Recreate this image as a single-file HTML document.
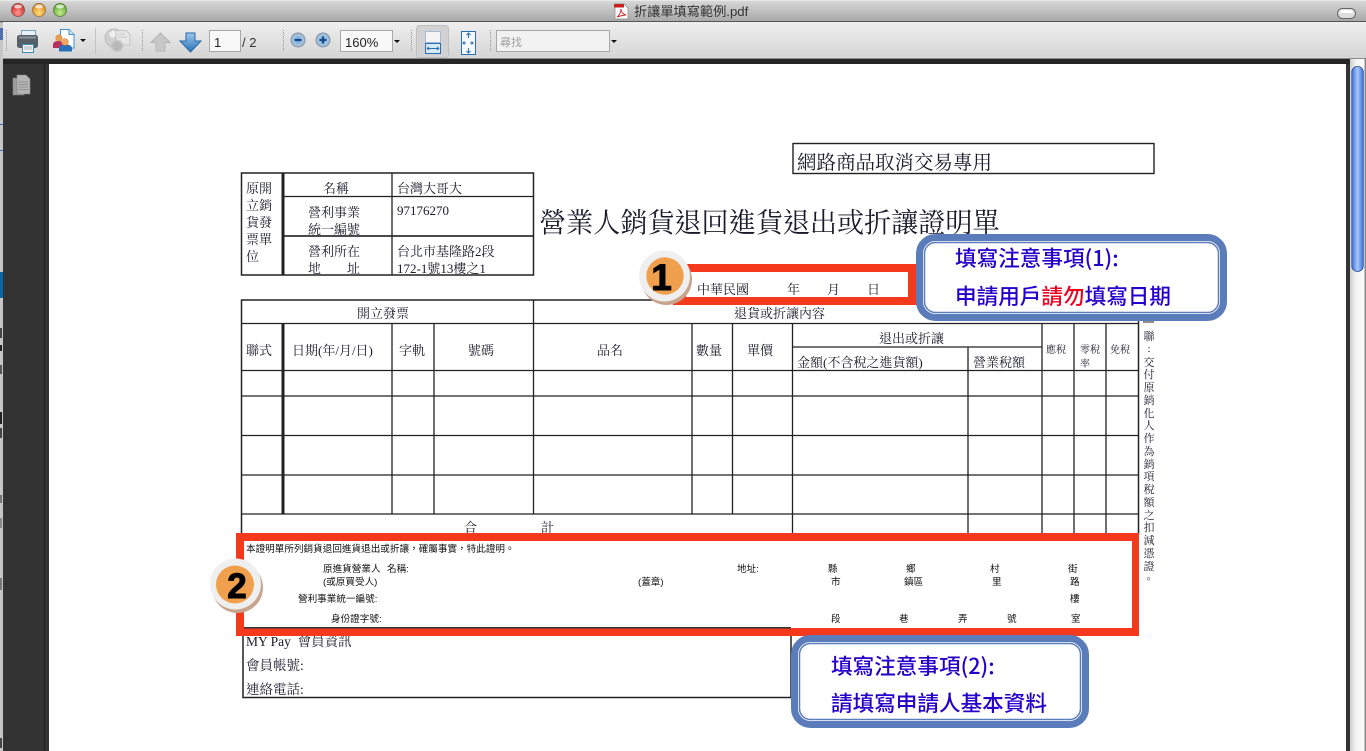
<!DOCTYPE html>
<html lang="zh-TW"><head><meta charset="utf-8"><title>折讓單填寫範例.pdf</title>
<style>
html,body{margin:0;padding:0;background:#fff;width:1366px;height:751px;overflow:hidden}
svg{display:block;position:absolute;left:0;top:0}
.s{font-family:"Liberation Serif","Noto Serif CJK SC",serif;fill:#1a1a2a}
.u{font-family:"Liberation Sans","Noto Sans CJK TC",sans-serif}
.c{font-family:"Noto Sans CJK TC","Liberation Sans",sans-serif;font-size:21.6px;fill:#2400cc;font-weight:500}
.t13{font-size:13px}.t10{font-size:10px}.t9{font-size:9.6px;font-family:"Liberation Sans","Noto Sans CJK TC",sans-serif;fill:#111}
</style></head><body>
<svg width="1366" height="751" viewBox="0 0 1366 751" xmlns="http://www.w3.org/2000/svg">
<defs>
<linearGradient id="tb" x1="0" y1="0" x2="0" y2="1"><stop offset="0" stop-color="#d9d9d9"/><stop offset="1" stop-color="#a6a6a6"/></linearGradient>
<linearGradient id="tl" x1="0" y1="0" x2="0" y2="1"><stop offset="0" stop-color="#efefef"/><stop offset="1" stop-color="#d4d4d4"/></linearGradient>
<radialGradient id="r" cx=".5" cy=".7" r=".7"><stop offset="0" stop-color="#ff9a90"/><stop offset="1" stop-color="#c41a1a"/></radialGradient>
<radialGradient id="y" cx=".5" cy=".7" r=".7"><stop offset="0" stop-color="#ffe080"/><stop offset="1" stop-color="#d97a10"/></radialGradient>
<radialGradient id="g" cx=".5" cy=".7" r=".7"><stop offset="0" stop-color="#c4ee90"/><stop offset="1" stop-color="#4f9a20"/></radialGradient>
<linearGradient id="sc" x1="0" y1="0" x2="1" y2="0"><stop offset="0" stop-color="#3f6fd8"/><stop offset=".5" stop-color="#a8c8fa"/><stop offset="1" stop-color="#3f6fd8"/></linearGradient>
<linearGradient id="bl" x1="0" y1="0" x2="0" y2="1"><stop offset="0" stop-color="#9cc8ec"/><stop offset="1" stop-color="#2a72b8"/></linearGradient>
<radialGradient id="zb" cx=".5" cy=".5" r=".5"><stop offset="0" stop-color="#5c94cc"/><stop offset=".7" stop-color="#a8c8e4"/><stop offset="1" stop-color="#7c8c9c"/></radialGradient>
<linearGradient id="sb" x1="0" y1="0" x2="1" y2="0"><stop offset="0" stop-color="#d0d0d0"/><stop offset=".4" stop-color="#f4f4f4"/><stop offset="1" stop-color="#fdfdfd"/></linearGradient>
</defs>

<!-- left strip -->
<rect x="0" y="22" width="4" height="729" fill="#c6c6c6"/>
<rect x="0" y="28" width="3" height="12" fill="#5070b0"/>
<rect x="0" y="124" width="3" height="1" fill="#3a6fc0"/><rect x="0" y="150" width="3" height="1" fill="#3a6fc0"/>
<rect x="0" y="272" width="3" height="26" fill="#0a64a8"/>
<rect x="0" y="328" width="2" height="10" fill="#444"/><rect x="0" y="345" width="2" height="6" fill="#222"/><rect x="0" y="365" width="2" height="9" fill="#555"/>
<rect x="0" y="412" width="2" height="12" fill="#222"/><rect x="0" y="428" width="2" height="10" fill="#444"/><rect x="0" y="495" width="2" height="8" fill="#777"/><rect x="0" y="518" width="2" height="10" fill="#888"/><rect x="0" y="578" width="2" height="12" fill="#777"/><rect x="0" y="738" width="2" height="10" fill="#444"/>

<!-- title bar -->
<rect x="0" y="0" width="1366" height="22" fill="url(#tb)"/>
<rect x="0" y="0" width="1366" height="1" fill="#e8e8e8"/>
<rect x="0" y="21" width="1366" height="1.4" fill="#555"/>
<circle cx="18" cy="10" r="6.600" fill="url(#r)" stroke="#8a5050" stroke-width=".7"/>
<circle cx="39" cy="10" r="6.600" fill="url(#y)" stroke="#8a7040" stroke-width=".7"/>
<circle cx="60" cy="10" r="6.600" fill="url(#g)" stroke="#5a7a40" stroke-width=".7"/>
<ellipse cx="18" cy="6.500" rx="4" ry="2" fill="#fff" opacity=".7"/><ellipse cx="39" cy="6.500" rx="4" ry="2" fill="#fff" opacity=".7"/><ellipse cx="60" cy="6.500" rx="4" ry="2" fill="#fff" opacity=".7"/>
<path d="M615 4h9l4 4v11h-13z" fill="#fff" stroke="#888" stroke-width=".7"/><rect x="614" y="4" width="10" height="3.500" fill="#c8201c"/><path d="M617 17c3-2 4-6 4-8 0 3 2 5 5 6-3 0-6 1-9 2z" fill="none" stroke="#d02020" stroke-width=".9"/>
<text x="634" y="16" class="u" font-size="13.200" fill="#333">折讓單填寫範例.pdf</text>
<rect x="1337.500" y="8.500" width="18" height="10" rx="5" fill="#ddd" stroke="#666"/>
<rect x="1340" y="10" width="13" height="3" rx="1.500" fill="#fff"/>

<!-- toolbar -->
<rect x="3" y="22" width="1363" height="37" fill="url(#tl)"/>
<rect x="3" y="58" width="1363" height="1.200" fill="#8c8c8c"/>
<g fill="none" stroke="#999" stroke-width="1" stroke-dasharray="1 1">
<path d="M6.500 30v21M142.500 30v21M283.500 30v21M411.500 30v21M490.500 30v21"/>
</g>
<rect x="95" y="28" width="1" height="26" fill="#c4c4c4"/>

<!-- print -->
<g>
<rect x="21.500" y="30.500" width="14" height="8" fill="#e8f2f6" stroke="#7ca4b8"/>
<rect x="17" y="35" width="21" height="13" rx="2.500" fill="#566068"/>
<rect x="19" y="36.500" width="17" height="2" fill="#8c949c"/>
<rect x="22.500" y="44.500" width="11" height="8" fill="#f4f4f4" stroke="#3f8ab0"/>
<path d="M24 47h8M24 49h8" stroke="#999" stroke-width=".8"/>
</g>
<!-- people/doc -->
<g>
<path d="M60.500 29.500h8.500l5 5v13.500H60.500z" fill="#fff" stroke="#3f8fd0"/>
<path d="M69 29.500v5h5" fill="#d0e4f4" stroke="#3f8fd0"/>
<path d="M53 48v-3q0-4 5-4t5 4v3z" fill="#b83060"/>
<circle cx="59" cy="38" r="3.200" fill="#e8a050" stroke="#c07830" stroke-width=".5"/>
<path d="M59 51.500v-3q0-4 6.500-4t6.500 4v3z" fill="#2a70b8"/>
<circle cx="65" cy="42" r="3.400" fill="#f0a860" stroke="#c07830" stroke-width=".5"/>
<path d="M80 39h6l-3 3z" fill="#111"/>
</g>
<!-- disabled share -->
<g>
<circle cx="114" cy="38" r="9" fill="#cfcfcf" stroke="#bdbdbd"/>
<path d="M109 33l5-3 3 4-4 4-3-1z" fill="#eee"/>
<path d="M116 30.500h10l4 4v10.500h-14z" fill="#e6e6e6" stroke="#c4c4c4"/>
<path d="M118 34h7M118 37h9" stroke="#c8c8c8"/>
<circle cx="117" cy="46" r="5.500" fill="#b8b8b8" stroke="#c8c8c8" stroke-width="2" stroke-dasharray="2 1.500"/>
</g>
<!-- up / down arrows -->
<path d="M160.500 33l9.500 9.500h-5v8.500h-9v-8.500h-5z" fill="#c8c8c8" stroke="#b4b4b4"/>
<path d="M186 33h9v8h6l-10.500 11-10.500-11h6z" fill="url(#bl)" stroke="#2a68a8"/>
<!-- page input -->
<rect x="209.500" y="30.500" width="31" height="21" fill="#f8f8f8" stroke="#a8a8a8"/>
<text x="214" y="47" class="u" font-size="13" fill="#222">1</text>
<text x="242" y="47" class="u" font-size="13" fill="#333">/ 2</text>
<!-- zoom -->
<circle cx="298" cy="40" r="7.500" fill="url(#zb)"/><rect x="294.500" y="39" width="7" height="2" fill="#164a88"/>
<circle cx="323" cy="40" r="7.500" fill="url(#zb)"/><path d="M319.500 40h7M323 36.500v7" stroke="#164a88" stroke-width="2"/>
<rect x="340.500" y="30.500" width="52" height="21" fill="#f8f8f8" stroke="#a8a8a8"/>
<text x="345" y="47" class="u" font-size="13" fill="#222">160%</text>
<path d="M394 40h6l-3 3z" fill="#111"/>
<!-- fit -->
<rect x="416.500" y="25.500" width="32" height="32" rx="3" fill="#d2d2d2" stroke="#c0c0c0"/>
<rect x="425.500" y="31.500" width="15" height="11" fill="#f4f4f4" stroke="#a0bcd8"/>
<rect x="425.500" y="43.500" width="15" height="10" fill="#d8eaf8" stroke="#2a70b0"/>
<path d="M427 48.500h12M427 48.500l2-1.500M427 48.500l2 1.500M439 48.500l-2-1.500M439 48.500l-2 1.500" stroke="#2a70b0" fill="none"/>
<rect x="461.500" y="31.500" width="14" height="23" fill="#f4f8fc" stroke="#2a70b0"/>
<path d="M468.500 33v5M466.500 35l2-2 2 2M468.500 53v-5M466.500 51l2 2 2-2M463 43h3M473 43h-3M464.500 41.500l-1.500 1.500 1.500 1.500M471.500 41.500l1.500 1.500-1.500 1.500" stroke="#2a70b0" fill="none"/>
<!-- search -->
<rect x="496.500" y="30.500" width="113" height="21" fill="#f2f2f2" stroke="#a8a8a8"/>
<text x="500" y="46" class="u" font-size="11" fill="#a0a0a0">尋找</text>
<path d="M611 40h6l-3 3z" fill="#111"/>

<!-- viewer dark -->
<rect x="3" y="59" width="1347" height="692" fill="#333"/>
<rect x="3" y="59" width="1347" height="5" fill="#262626"/>
<rect x="44" y="64" width="1" height="687" fill="#1d1d1d"/>
<rect x="49" y="64" width="1297" height="687" fill="#fff"/>
<!-- pages icon -->
<path d="M13 78h11v17H13z" fill="#9c9c9c" stroke="#8a8a8a" stroke-width=".6"/>
<path d="M17 75h9l4 4v15H17z" fill="#b4b4b4" stroke="#888" stroke-width=".6"/>
<path d="M19 82h9M19 84.500h9M19 87h9M19 89.500h9" stroke="#888" stroke-width=".7"/>
<!-- scrollbar -->
<rect x="1350" y="59" width="16" height="692" fill="url(#sb)"/>
<rect x="1351.800" y="66.500" width="11.500" height="205" rx="5.500" fill="url(#sc)" stroke="#2a4c98" stroke-width=".8"/>
<rect x="1364.500" y="59" width="1.500" height="692" fill="#888"/>

<!-- form lines -->
<g stroke="#222" fill="none" stroke-width="1.300">
<rect x="793" y="143.500" width="361" height="30" stroke-width="1.400"/>
<rect x="241.500" y="173" width="292" height="102" stroke-width="1.500"/>
<path d="M283 173v102" stroke-width="3"/>
<path d="M392 173v102M284 196.500h249M284 236h249"/>
<path d="M284 236h249" stroke-width="1.600"/>
<rect x="241.500" y="300" width="897" height="234" stroke-width="1.500"/>
<path d="M241 323.500h897M241 370.500h897M241 435.500h897M241 475h897M241 514h897M241 396h897" />
<path d="M283 323.500V514" stroke-width="3"/>
<path d="M392 323.500V514M434 323.500V514M533.500 300V514M692 323.500V514M732.500 323.500V514M792.500 323.500V534M968 347V534M1042 323.500V534M1074 323.500V534M1106 323.500V534M793 347h249"/>
<path d="M244 627.500h547" stroke-width="2"/>
<path d="M243 628v69.500h548V628" stroke-width="1.500"/>
</g>

<!-- form text -->
<g class="s">
<text x="797" y="169" font-size="19.500">網路商品取消交易專用</text>
<text x="539" y="232" font-size="27.100">營業人銷貨退回進貨退出或折讓證明單</text>
<g class="t13">
<text x="246" y="193">原開</text><text x="246" y="210">立銷</text><text x="246" y="227">貨發</text><text x="246" y="244">票單</text><text x="246" y="261">位</text>
<text x="323" y="193">名稱</text><text x="397" y="193">台灣大哥大</text>
<text x="308" y="217">營利事業</text><text x="308" y="234">統一編號</text>
<text x="397" y="215">97176270</text>
<text x="308" y="256">營利所在</text><text x="308" y="273">地</text><text x="347" y="273">址</text>
<text x="397" y="256">台北市基隆路2段</text><text x="397" y="273">172-1號13樓之1</text>
<text x="357" y="318">開立發票</text><text x="734" y="318">退貨或折讓內容</text>
<text x="246" y="355">聯式</text><text x="292" y="355">日期(年/月/日)</text><text x="399" y="355">字軌</text><text x="468" y="355">號碼</text><text x="597" y="355">品名</text><text x="696" y="355">數量</text><text x="747" y="355">單價</text>
<text x="879" y="343">退出或折讓</text><text x="797" y="367">金額(不含稅之進貨額)</text><text x="973" y="367">營業稅額</text>
<text x="464" y="532">合</text><text x="541" y="532">計</text>
<text x="697" y="294">中華民國</text><text x="787" y="294">年</text><text x="827" y="294">月</text><text x="867" y="294">日</text>
</g>
<g class="t10">
<text x="1046" y="353">應稅</text><text x="1080" y="353">零稅</text><text x="1080" y="367">率</text><text x="1110" y="353">免稅</text>
</g>
<g font-size="11" text-anchor="middle">
<text x="1149" y="340">聯</text><text x="1149" y="352">:</text><text x="1149" y="366">交</text><text x="1149" y="378">付</text><text x="1149" y="391">原</text><text x="1149" y="404">銷</text><text x="1149" y="417">化</text><text x="1149" y="429">人</text><text x="1149" y="442">作</text><text x="1149" y="455">為</text><text x="1149" y="468">銷</text><text x="1149" y="480">項</text><text x="1149" y="493">稅</text><text x="1149" y="506">額</text><text x="1149" y="519">之</text><text x="1149" y="531">扣</text><text x="1149" y="544">減</text><text x="1149" y="557">憑</text><text x="1149" y="570">證</text><text x="1152" y="579">。</text>
</g>
<text x="246" y="646" font-size="13.500">MY Pay&#160; 會員資訊</text>
<text x="246" y="670" font-size="13.500">會員帳號:</text>
<text x="246" y="694" font-size="13.500">連絡電話:</text>
</g>

<!-- red box 1 -->
<path fill="#f5391c" fill-rule="evenodd" d="M673 264h244v41H673zM686 272v25h222v-25z"/>
<!-- red box 2 -->
<rect x="240" y="537" width="895" height="95" fill="#fff"/>
<path fill="#f5391c" fill-rule="evenodd" d="M236 533h903v103H236zM244 541v87h888v-87z"/>
<rect x="244" y="627" width="547" height="1.500" fill="#333"/>
<rect x="1143" y="321.500" width="11" height="1" fill="#222"/>

<g>
<text x="246" y="552" class="t9">本證明單所列銷貨退回進貨退出或折讓，確屬事實，特此證明。</text>
<text x="323" y="572" class="t9">原進貨營業人</text><text x="387" y="572" class="t9">名稱:</text>
<text x="323" y="585" class="t9">(或原買受人)</text><text x="638" y="585" class="t9">(蓋章)</text>
<text x="298" y="602" class="t9">營利事業統一編號:</text><text x="331" y="622" class="t9">身份證字號:</text>
<text x="737" y="572" class="t9">地址:</text><text x="828" y="572" class="t9">縣</text><text x="906" y="572" class="t9">鄉</text><text x="990" y="572" class="t9">村</text><text x="1068" y="572" class="t9">街</text>
<text x="831" y="585" class="t9">市</text><text x="904" y="585" class="t9">鎮區</text><text x="992" y="585" class="t9">里</text><text x="1070" y="585" class="t9">路</text>
<text x="1070" y="602" class="t9">樓</text>
<text x="831" y="622" class="t9">段</text><text x="899" y="622" class="t9">巷</text><text x="958" y="622" class="t9">弄</text><text x="1007" y="622" class="t9">號</text><text x="1071" y="622" class="t9">室</text>
</g>

<!-- badges -->
<g>
<circle cx="666.500" cy="279.500" r="25.500" fill="#c9a48c"/>
<circle cx="664.500" cy="276" r="25.500" fill="#efefef"/>
<circle cx="665" cy="276" r="18.700" fill="#f0a04c"/>
<text x="661.500" y="290" text-anchor="middle" class="u" font-size="37" font-weight="bold" fill="#000" stroke="#000" stroke-width="1">1</text>
</g>
<g>
<circle cx="237.500" cy="587.500" r="25.500" fill="#c9a48c"/>
<circle cx="235.500" cy="584" r="25.500" fill="#efefef"/>
<circle cx="235" cy="584.500" r="19" fill="#f0a04c"/>
<text x="237" y="598" text-anchor="middle" class="u" font-size="35" font-weight="bold" fill="#000" stroke="#000" stroke-width="1">2</text>
</g>

<!-- callout 1 -->
<rect x="919.500" y="237.500" width="304" height="80" rx="16" fill="#fff" stroke="#5b7cba" stroke-width="7"/>
<rect x="924.500" y="242.500" width="294" height="70" rx="11" fill="#fff" stroke="#5b7cba" stroke-width="1.500"/>
<text x="955" y="266" class="c">填寫注意事項(1):</text>
<text x="955" y="304" class="c">申請用戶<tspan fill="#f00020">請勿</tspan>填寫日期</text>
<!-- callout 2 -->
<rect x="794.500" y="638.500" width="291" height="86" rx="16" fill="#fff" stroke="#5b7cba" stroke-width="7"/>
<rect x="799.500" y="643.500" width="281" height="76" rx="11" fill="#fff" stroke="#5b7cba" stroke-width="1.500"/>
<text x="831" y="674" class="c">填寫注意事項(2):</text>
<text x="831" y="711" class="c">請填寫申請人基本資料</text>
</svg>
</body></html>
